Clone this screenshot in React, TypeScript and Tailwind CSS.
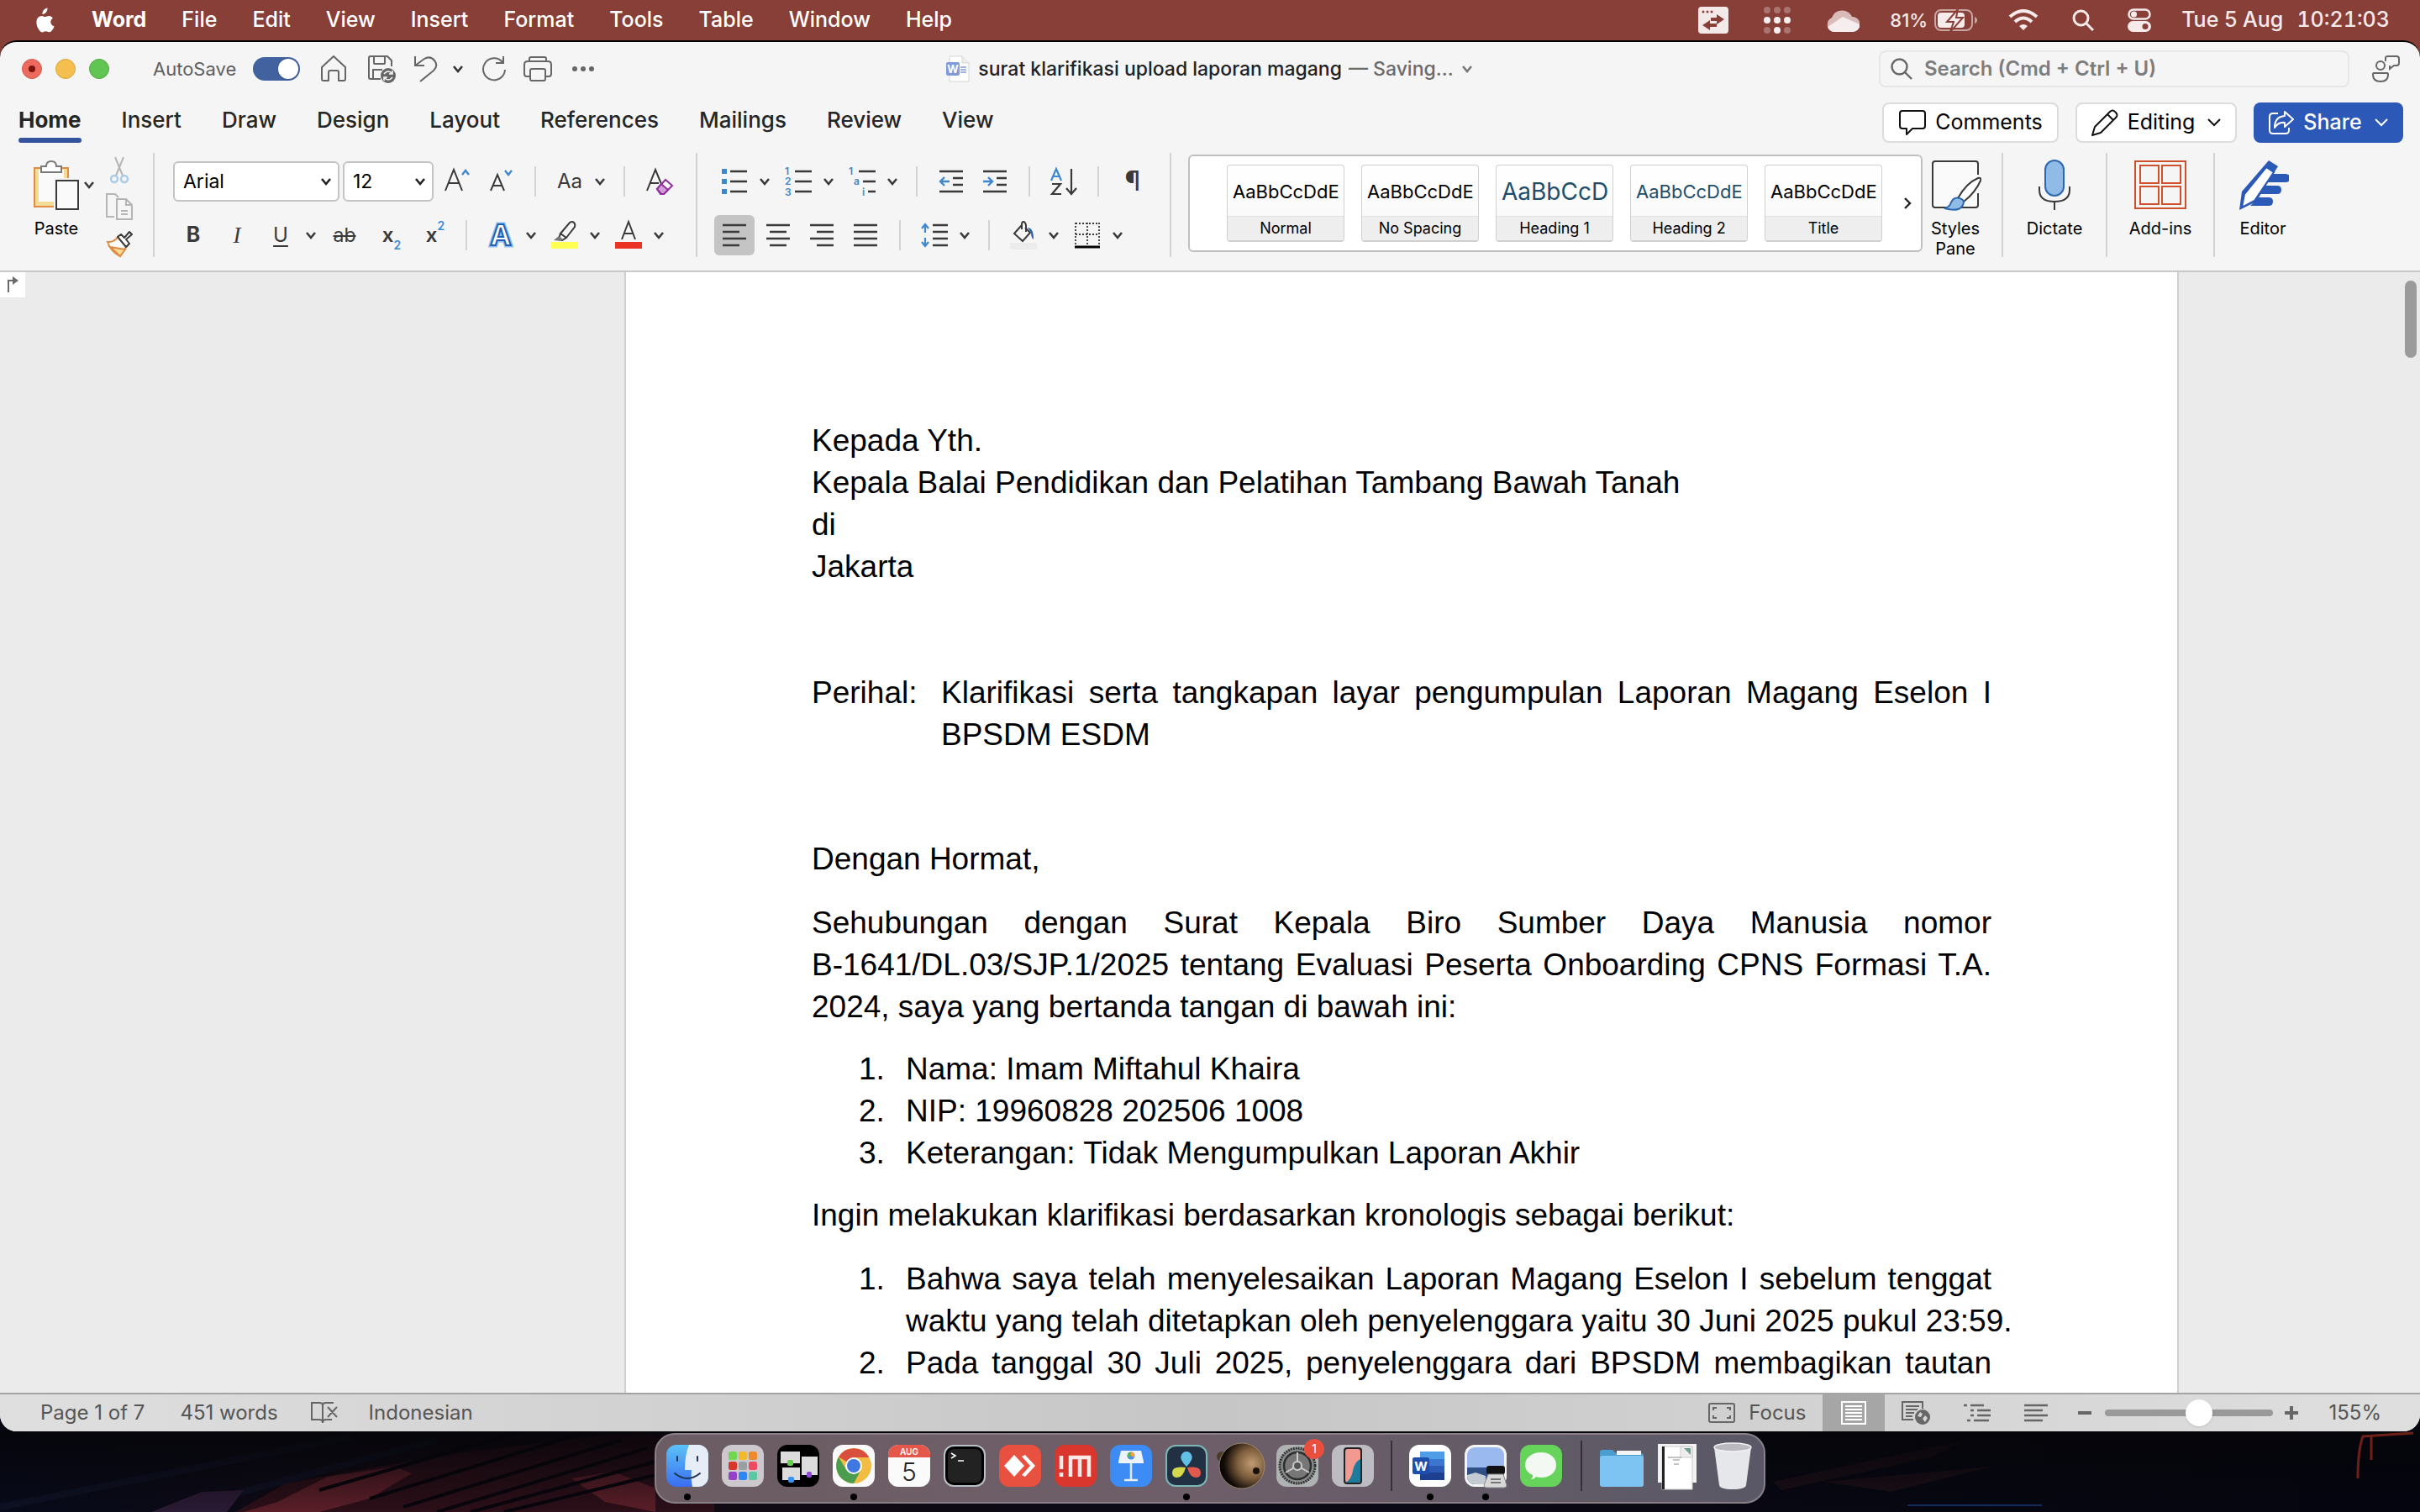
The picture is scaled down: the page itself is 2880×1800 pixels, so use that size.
import React from 'react';

const INK = '#3b3a39';
const BLUE = '#3d88cf';

const menus = ['File', 'Edit', 'View', 'Insert', 'Format', 'Tools', 'Table', 'Window', 'Help'];
const tabs = ['Insert', 'Draw', 'Design', 'Layout', 'References', 'Mailings', 'Review', 'View'];

function Chevron({ className = '' }: any) {
  return (
    <svg viewBox="0 0 16 16" className={'w-4 h-4 ' + className} fill="none" stroke="currentColor" strokeWidth="2.6">
      <path d="M3 5l5 6 5-6" />
    </svg>
  );
}

function Tool({ label, className = '', children }: any) {
  return (
    <button aria-label={label} className={'w-8 h-8 shrink-0 flex items-center justify-center ' + className}>
      <svg viewBox="0 0 32 32" className="w-8 h-8 overflow-visible" fill="none" stroke={INK} strokeWidth="2">
        {children}
      </svg>
    </button>
  );
}

function Drop({ label, className = 'ml-3' }: any) {
  return (
    <button aria-label={label + ' options'} className={'w-4 h-8 shrink-0 flex items-center text-[#3b3a39] ' + className}>
      <Chevron />
    </button>
  );
}

function Sep({ className = 'ml-5' }: any) {
  return <div className={'w-0.5 h-9 shrink-0 bg-[#d4d4d4] ' + className} />;
}

function Divider({ className = '' }: any) {
  return <div className={'w-0.5 h-[124px] shrink-0 bg-[#d2d2d2] ' + className} />;
}

function MenuBar() {
  return (
    <header className="h-12 shrink-0 bg-[#883f38] flex items-center justify-between text-white text-[25px] font-medium pl-10 pr-9">
      <nav className="flex items-center gap-[42px]">
        <button aria-label="Apple">
          <svg viewBox="0 0 27 32" className="w-[27px] h-8" fill="#fff">
            <path d="M18.500 0.500c.2 2-.6 3.900-1.700 5.200-1.200 1.400-2.800 2.300-4.300 2.200-.2-1.900.6-3.800 1.700-5.100C15.300 1.500 17.100.6 18.500.5zM22.300 17c0-3 2.500-4.500 2.600-4.600-1.500-2.100-3.700-2.400-4.500-2.400-1.900-.2-3.700 1.100-4.700 1.100s-2.500-1.100-4-1.100C9.500 10 7.600 11.200 6.500 13c-2.300 4-.6 9.900 1.600 13.100 1.100 1.600 2.400 3.400 4.100 3.300 1.600-.1 2.300-1.100 4.200-1.100 2 0 2.500 1.100 4.300 1 1.800 0 2.900-1.600 4-3.200 1.200-1.800 1.700-3.600 1.800-3.700-.1 0-4.200-1.500-4.200-5.400z" transform="translate(-2 1)" />
          </svg>
        </button>
        <button className="font-bold">Word</button>
        {menus.map((m) => <button key={m}>{m}</button>)}
      </nav>
      <div className="flex items-center text-[#f6eae9]">
        <svg viewBox="0 0 36 32" className="w-9 h-8" fill="#f3e9e8">
          <rect width="36" height="32" rx="4" />
          <g fill="#883f38"><circle cx="6" cy="6" r="1.500" /><circle cx="11" cy="6" r="1.500" /><circle cx="16" cy="6" r="1.500" /><path d="M31 15l-9-6v4h-7v4h7v4zM5 22l9-6v4h8v4h-8v4z" /></g>
        </svg>
        <svg viewBox="0 0 32 32" className="w-8 h-8 ml-[42px]" fill="#f8eeee">
          {[4, 16, 28].map((x) => (
            <g key={x}><circle cx={x} cy="4" r="4" opacity=".3" /><circle cx={x} cy="16" r="4" /><circle cx={x} cy="28" r="4" opacity={x === 16 ? 1 : 0.3} /></g>
          ))}
        </svg>
        <svg viewBox="0 0 40 28" className="w-10 h-7 ml-[42px]">
          <path d="M9 28a9 9 0 0 1-2-17 13 13 0 0 1 24-1 9 9 0 0 1 1 18z" fill="#d9bcb9" />
          <path d="M2 22l18-12 20 9a8 8 0 0 1-8 9H9a9 9 0 0 1-7-6z" fill="#f6eeee" />
        </svg>
        <span className="text-[22px] ml-9">81%</span>
        <svg viewBox="0 0 52 26" className="w-[52px] h-[26px] ml-2">
          <rect x="1" y="1" width="44" height="24" rx="7" fill="none" stroke="#c9a5a1" strokeWidth="2" />
          <rect x="4" y="4" width="32" height="18" rx="4" fill="#f6eaea" />
          <path d="M28 0L15 15h8l-4 12L34 10h-8z" fill="#f6eaea" stroke="#883f38" strokeWidth="2" />
          <path d="M48 9v8q3-1 3-4t-3-4z" fill="#c9a5a1" />
        </svg>
        <svg viewBox="0 0 36 26" className="w-9 h-[26px] ml-9" fill="none" stroke="#f6eaea" strokeWidth="4">
          <path d="M2 9q16-14 32 0M8 15q10-9 20 0" />
          <path d="M18 25l-5-5q5-4 10 0z" fill="#f6eaea" stroke="none" />
        </svg>
        <svg viewBox="0 0 26 26" className="w-[26px] h-[26px] ml-10" fill="none" stroke="#f6eaea" strokeWidth="3">
          <circle cx="10.500" cy="10.500" r="8.500" /><path d="M17 17l8 8" />
        </svg>
        <svg viewBox="0 0 28 28" className="w-7 h-7 ml-10">
          <rect x="1.500" y="1.500" width="25" height="11" rx="5.500" fill="none" stroke="#f6eaea" strokeWidth="2.500" />
          <circle cx="7.500" cy="7" r="3.500" fill="#f6eaea" />
          <rect y="15" width="28" height="13" rx="6.500" fill="#f6eaea" />
          <circle cx="21" cy="21.500" r="3.500" fill="#883f38" />
        </svg>
        <span className="ml-9">Tue 5 Aug</span>
        <span className="ml-4 tabular-nums">10:21:03</span>
      </div>
    </header>
  );
}

function TitleBar() {
  return (
    <div className="h-16 shrink-0 grid grid-cols-[1fr_auto_1fr] items-center px-6">
      <div className="flex items-center text-[#5f5f5f]">
        <button aria-label="Close" className="w-6 h-6 ml-0.5 rounded-full bg-[#ed6a5e] border border-[#d35b50] flex items-center justify-center"><span className="w-2 h-2 rounded-full bg-[#7a130c]" /></button>
        <button aria-label="Minimize" className="w-6 h-6 ml-4 rounded-full bg-[#f4bf4f] border border-[#d9a440]" />
        <button aria-label="Zoom" className="w-6 h-6 ml-4 rounded-full bg-[#61c554] border border-[#51a73e]" />
        <label htmlFor="autosave" className="ml-[52px] text-[22px]">AutoSave</label>
        <span className="relative ml-5 w-14 h-7">
          <input id="autosave" type="checkbox" role="switch" defaultChecked className="appearance-none block w-14 h-7 rounded-full bg-[#41629f]" />
          <span className="absolute right-0.5 top-0.5 w-6 h-6 rounded-full bg-white shadow pointer-events-none" />
        </span>
        <button aria-label="Home" className="ml-6">
          <svg viewBox="0 0 32 32" className="w-8 h-8" fill="none" stroke="#666" strokeWidth="2"><path d="M2 14L16 1l14 13v14q0 2-2 2h-6V20q0-2-2-2h-8q-2 0-2 2v10H4q-2 0-2-2z" strokeLinejoin="round" /></svg>
        </button>
        <button aria-label="Save" className="ml-6">
          <svg viewBox="0 0 34 34" className="w-[34px] h-[34px]" fill="none" stroke="#666" strokeWidth="2">
            <path d="M16 29H4q-2 0-2-2V4q0-2 2-2h20l5 5v7M8 2v8q0 1 1 1h11q1 0 1-1V2M7 29V18h11" /><circle cx="25" cy="25" r="9" fill="#666" stroke="none" />
            <path d="M20 23q5-6 10 0M30 19v4h-4M30 27q-5 6-10 0M20 31v-4h4" stroke="#f5f5f5" strokeWidth="1.600" />
          </svg>
        </button>
        <button aria-label="Undo" className="ml-5">
          <svg viewBox="0 0 30 32" className="w-[30px] h-8" fill="none" stroke="#666" strokeWidth="2"><path d="M3 1v11h11M3 12L14 4q7-4 12 2t-1 12L9 31" /></svg>
        </button>
        <Chevron className="ml-4 text-[#333]" />
        <button aria-label="Redo" className="ml-5">
          <svg viewBox="0 0 30 30" className="w-[30px] h-[30px]" fill="none" stroke="#666" strokeWidth="2"><path d="M25 7A13 13 0 1 0 28 16M26 0v8h-9" /></svg>
        </button>
        <button aria-label="Print" className="ml-5">
          <svg viewBox="0 0 34 30" className="w-[34px] h-[30px]" fill="none" stroke="#666" strokeWidth="2">
            <path d="M8 24H4q-3 0-3-3V10q0-4 4-4h24q4 0 4 4v11q0 3-3 3h-4M7 6V3q0-2 2-2h16q2 0 2 2v3" /><rect x="8" y="15" width="18" height="14" rx="2" />
          </svg>
        </button>
        <button aria-label="More" className="ml-6 flex gap-1">
          <span className="w-1.5 h-1.5 rounded-full bg-[#666]" /><span className="w-1.5 h-1.5 rounded-full bg-[#666]" /><span className="w-1.5 h-1.5 rounded-full bg-[#666]" />
        </button>
      </div>
      <h1 className="flex items-center text-[23px] font-medium text-[#222]">
        <svg viewBox="0 0 28 32" className="w-7 h-8 mr-2.5">
          <path d="M4 1h15l8 8v22H4z" fill="#fff" stroke="#d5d5d5" /><path d="M19 1v8h8" fill="#eee" stroke="#d5d5d5" />
          <rect y="8" width="16" height="16" rx="2" fill="#7f9bdb" />
          <text x="8" y="20.500" fontSize="13" fontWeight="700" fill="#fff" textAnchor="middle">W</text>
          <path d="M17 14h7M17 17h7M17 20h7" stroke="#7f9bdb" strokeWidth="1.500" />
        </svg>
        surat klarifikasi upload laporan magang
        <span className="ml-2 text-[#6b6b6b]">— Saving...</span>
        <Chevron className="ml-2 text-[#777]" />
      </h1>
      <div className="flex items-center justify-end">
        <label className="w-[560px] h-11 rounded-lg border-2 border-[#e7e7e7] bg-[#f5f5f5] flex items-center px-3">
          <svg viewBox="0 0 26 26" className="w-[26px] h-[26px] shrink-0" fill="none" stroke="#666" strokeWidth="2.400"><circle cx="10.500" cy="10.500" r="9" /><path d="M17 17l8 8" /></svg>
          <input aria-label="Search" placeholder="Search (Cmd + Ctrl + U)" className="ml-3.5 w-full outline-none text-[24px] font-semibold placeholder:text-[#7d7d7d]" />
        </label>
        <button aria-label="Account" className="ml-[26px]">
          <svg viewBox="0 0 34 34" className="w-[34px] h-[34px]" fill="none" stroke="#666" strokeWidth="2">
            <circle cx="11" cy="13" r="5" /><path d="M3 22h16q1 0 1 2 0 8-9 8T2 24q0-2 1-2zM17 8V4q0-2 3-2h10q3 0 3 3v5q0 3-3 3h-3l-5 4v-4" />
          </svg>
        </button>
      </div>
    </div>
  );
}

function TabRow() {
  return (
    <div className="h-16 shrink-0 flex items-center justify-between pl-[22px] pr-5">
      <nav className="flex items-center gap-12 mb-2 text-[26px] font-medium text-[#262626]">
        <button className="relative font-bold h-14">
          Home
          <span className="absolute left-0 right-0 bottom-0 h-1.5 rounded-full bg-[#33539c]" />
        </button>
        {tabs.map((t) => <button key={t}>{t}</button>)}
      </nav>
      <div className="flex items-center gap-5 text-[25px] text-black">
        <button className="h-12 w-[210px] rounded-lg bg-white border-2 border-[#dcdcdc] flex items-center justify-center gap-2.5">
          <svg viewBox="0 0 34 32" className="w-[34px] h-8" fill="none" stroke="#111" strokeWidth="2"><path d="M5 2h24q3 0 3 3v15q0 3-3 3H17l-7 7v-7H5q-3 0-3-3V5q0-3 3-3z" strokeLinejoin="round" /></svg>
          Comments
        </button>
        <button className="h-12 w-48 rounded-lg bg-white border-2 border-[#dcdcdc] flex items-center justify-center gap-2.5">
          <svg viewBox="0 0 34 34" className="w-[34px] h-[34px]" fill="none" stroke="#111" strokeWidth="2" strokeLinejoin="round"><path d="M2 32l3-10L23 4q3-3 6 0l1 1q3 3 0 6L12 29zM20 7l7 7" /></svg>
          Editing
          <svg viewBox="0 0 18 12" className="w-[18px] h-3 ml-1" fill="none" stroke="#111" strokeWidth="2"><path d="M2 2l7 7 7-7" /></svg>
        </button>
        <button className="h-12 w-[178px] rounded-lg bg-[#2c59b7] text-white font-medium flex items-center justify-center gap-2.5">
          <svg viewBox="0 0 32 30" className="w-8 h-[30px]" fill="none" stroke="#fff" strokeWidth="2" strokeLinejoin="round"><path d="M12 4H6Q2 4 2 8v16q0 4 4 4h15q4 0 4-4v-3M20 2l10 9-10 9v-5q-8-1-12 6 0-13 12-14z" /></svg>
          Share
          <svg viewBox="0 0 18 12" className="w-[18px] h-3 ml-1" fill="none" stroke="#fff" strokeWidth="2"><path d="M2 2l7 7 7-7" /></svg>
        </button>
      </div>
    </div>
  );
}

function PasteGroup() {
  return (
    <div className="flex">
      <div className="w-[78px] flex flex-col items-center">
        <button className="flex flex-col items-center text-[20px] leading-6 text-black">
          <svg viewBox="0 0 54 62" className="w-[54px] h-[62px] mt-2 mb-2">
            <path d="M1 10h40v46H1z" fill="#f5dc96" stroke="#e08c44" strokeWidth="2" />
            <path d="M6 12h30v38H6z" fill="#fafafa" />
            <path d="M9 15V8h6q0-6 6-6t6 6h6v7z" fill="#fff" stroke="#7a7a7a" strokeWidth="2" />
            <path d="M24 22h30v40H24z" fill="#f5f5f5" />
            <path d="M27 25h26v34H27z" fill="#fafafa" stroke={INK} strokeWidth="2" />
          </svg>
          Paste
        </button>
      </div>
      <Drop label="Paste" className="mt-[22px] -ml-2" />
      <div className="ml-3 mt-1 flex flex-col gap-3">
        <Tool label="Cut"><g stroke="#b5b5b5"><path d="M11 1l9 22M21 1l-9 22" /></g><g stroke="#a9cbe8" strokeWidth="2.400"><circle cx="10" cy="27" r="4" /><circle cx="22" cy="27" r="4" /></g></Tool>
        <Tool label="Copy"><g stroke="#b5b5b5"><path d="M10 28H1V1h10l4 4M13 7h11l7 7v17H13zM24 7v7h7M18 21h8M18 25h8" /></g></Tool>
        <Tool label="Format Painter">
          <path d="M2 14q8 1 13-7l11 11q-6 6-9 13Q6 26 2 14z" fill="#fdfdfd" stroke="#e08c44" /><path d="M5 20l18 3-6 8z" fill="#f5dc96" stroke="#e08c44" />
          <path d="M14 8l4-3 4 4 6-7 3 3-7 6 4 5-4 4z" fill="#fff" strokeLinejoin="round" />
        </Tool>
      </div>
    </div>
  );
}

function FontGroup() {
  return (
    <div className="flex flex-col pt-2.5 gap-4">
      <div className="h-12 flex items-center text-[23px] text-black">
        <span className="relative">
          <select aria-label="Font" className="appearance-none w-[198px] h-12 rounded-md bg-white border-2 border-[#c4c4c4] pl-2.5"><option>Arial</option></select>
          <Chevron className="absolute right-2 top-4 pointer-events-none text-[#222]" />
        </span>
        <span className="relative ml-1">
          <select aria-label="Font size" className="appearance-none w-[108px] h-12 rounded-md bg-white border-2 border-[#c4c4c4] pl-2.5"><option>12</option></select>
          <Chevron className="absolute right-2 top-4 pointer-events-none text-[#222]" />
        </span>
        <Tool label="Increase Font Size" className="ml-3"><path d="M2 27L12 2l10 25M6 18h12" /><path d="M22 8l4-5 4 5" stroke={BLUE} strokeWidth="2.400" /></Tool>
        <Tool label="Decrease Font Size" className="ml-5"><path d="M4 27L12 8l8 19M7 21h10" /><path d="M21 3l4 5 4-5" stroke={BLUE} strokeWidth="2.400" /></Tool>
        <Sep className="ml-6" />
        <button className="ml-6 w-8 text-[24px] text-[#3b3a39] flex justify-center">Aa</button>
        <Drop label="Change Case" />
        <Sep />
        <Tool label="Clear Formatting" className="ml-6"><path d="M2 27L12 2l7 17M6 18h10" /><g stroke="#90309c"><path d="M14 25l10-11 8 7-10 10h-4z" fill="#fff" /><path d="M14 25l5-6 8 7-5 5h-3z" fill="#d69bdc" /></g></Tool>
      </div>
      <div className="h-12 flex items-center pl-2 text-[#3b3a39]">
        <button className="w-8 text-[25px] font-bold">B</button>
        <button className="w-8 ml-5 text-[27px] italic font-['Liberation_Serif',serif]">I</button>
        <button className="w-8 ml-5 text-[24px] underline underline-offset-4">U</button>
        <Drop label="Underline" />
        <button className="w-8 ml-4 text-[23px] line-through flex justify-center">ab</button>
        <button aria-label="Subscript" className="w-8 ml-6 text-[24px] font-semibold flex justify-center items-center">x<span className="text-[14px] text-[#3d88cf] self-end -mb-1">2</span></button>
        <button aria-label="Superscript" className="w-8 ml-5 text-[24px] font-semibold flex justify-center items-center">x<span className="text-[14px] text-[#3d88cf] self-start -mt-1">2</span></button>
        <Sep />
        <Tool label="Text Effects" className="ml-6"><text x="16" y="28" fontSize="34" fontWeight="700" textAnchor="middle" stroke="#8fc0ee" strokeWidth="5" fill="#8fc0ee">A</text><text x="16" y="28" fontSize="34" fontWeight="700" textAnchor="middle" stroke="#1f5fb4" strokeWidth="2" fill="#fff">A</text></Tool>
        <Drop label="Text Effects" />
        <Tool label="Highlight" className="ml-4"><path d="M11 14L22 1q3-2 5 0t1 5L18 19zM11 14l-2 6 4 2 5-3" /><path d="M3 22l6-5 5 4-2 2z" fill="#777" stroke="none" /><path d="M0 24h32v8H0z" fill="#ffff54" stroke="none" /></Tool>
        <Drop label="Highlight" />
        <Tool label="Font Color" className="ml-4"><path d="M8 21L16 0l8 21M11 14h10" /><path d="M0 24h32v8H0z" fill="#eb3323" stroke="none" /></Tool>
        <Drop label="Font Color" />
      </div>
    </div>
  );
}

function ParagraphGroup() {
  return (
    <div className="flex flex-col pt-2.5 gap-4">
      <div className="h-12 flex items-center pl-2">
        <Tool label="Bullets"><path d="M11 4h20M11 16h20M11 28h20" strokeWidth="2.400" /><path d="M1 1h6v6H1zM1 13h6v6H1zM1 25h6v6H1z" fill={BLUE} stroke="none" /></Tool>
        <Drop label="Bullets" />
        <Tool label="Numbering" className="ml-4">
          <path d="M12 4h20M12 16h20M12 28h20" strokeWidth="2.400" />
          <g fill={BLUE} stroke="none" fontSize="12" fontWeight="600"><text x="0" y="8">1</text><text x="0" y="20">2</text><text x="0" y="33">3</text></g>
        </Tool>
        <Drop label="Numbering" />
        <Tool label="Multilevel List" className="ml-4">
          <path d="M12 4h20M17 16h15M23 28h9" strokeWidth="2.400" />
          <g fill={BLUE} stroke="none" fontSize="12" fontWeight="600"><text x="0" y="8">1</text><text x="6" y="20">a</text><text x="16" y="33">i</text></g>
        </Tool>
        <Drop label="Multilevel List" />
        <Sep />
        <Tool label="Decrease Indent" className="ml-6"><path d="M2 4h28M18 12h12M18 20h12M2 28h28" strokeWidth="2.400" /><path d="M14 16H3M8 11l-5 5 5 5" stroke={BLUE} strokeWidth="2.400" /></Tool>
        <Tool label="Increase Indent" className="ml-5"><path d="M2 4h28M18 12h12M18 20h12M2 28h28" strokeWidth="2.400" /><path d="M2 16h11M8 11l5 5-5 5" stroke={BLUE} strokeWidth="2.400" /></Tool>
        <Sep className="ml-6" />
        <Tool label="Sort" className="ml-6"><path d="M1 15L7 1l6 14M3 10h8" stroke={BLUE} strokeWidth="2.200" /><path d="M2 19h10L2 31h11M25 1v29M19 24l6 7 6-7" strokeWidth="2.200" /></Tool>
        <Sep className="ml-6" />
        <button aria-label="Show marks" className="ml-6 w-8 text-[32px] leading-8 text-[#3b3a39]">¶</button>
      </div>
      <div className="h-12 flex items-center">
        <button aria-label="Align Left" className="w-12 h-12 rounded-md bg-[#c4c4c4] flex items-center justify-center">
          <svg viewBox="0 0 32 32" className="w-8 h-8" fill="none" stroke={INK} strokeWidth="2.400"><path d="M2 4h28M2 12h20M2 20h28M2 28h20" /></svg>
        </button>
        <Tool label="Center" className="ml-3"><path d="M2 4h28M6 12h20M2 20h28M6 28h20" strokeWidth="2.400" /></Tool>
        <Tool label="Align Right" className="ml-5"><path d="M2 4h28M10 12h20M2 20h28M10 28h20" strokeWidth="2.400" /></Tool>
        <Tool label="Justify" className="ml-5"><path d="M2 4h28M2 12h28M2 20h28M2 28h28" strokeWidth="2.400" /></Tool>
        <Sep className="ml-6" />
        <Tool label="Line Spacing" className="ml-6"><path d="M14 4h18M14 12h18M14 20h18M14 28h18" strokeWidth="2.400" /><path d="M5 13V3M1 8l4-5 4 5M5 19v10M1 24l4 5 4-5" stroke={BLUE} strokeWidth="2.200" /></Tool>
        <Drop label="Line Spacing" />
        <Sep />
        <Tool label="Shading" className="ml-6"><path d="M14 4L5 14l10 9 9-10-6-6M14 9V3q0-3 2-3t3 4v8" /><path d="M21 7q7 0 7 14-3-2-3-8z" fill="#2563b8" stroke="none" /><path d="M0 25h32v8H0z" fill="#ececec" stroke="none" /></Tool>
        <Drop label="Shading" />
        <Tool label="Borders" className="ml-4"><path d="M2 2h28M2 15h28M2 1v27M16 1v27M30 1v27" strokeDasharray="2 2" strokeWidth="1.800" /><path d="M1 30h30" stroke="#000" strokeWidth="3" /></Tool>
        <Drop label="Borders" />
      </div>
    </div>
  );
}

const styles = [
  { name: 'Normal', sample: 'AaBbCcDdE', cls: 'text-[22px] text-black' },
  { name: 'No Spacing', sample: 'AaBbCcDdE', cls: 'text-[22px] text-black' },
  { name: 'Heading 1', sample: 'AaBbCcD', cls: 'text-[28px] text-[#1f4e6b]' },
  { name: 'Heading 2', sample: 'AaBbCcDdE', cls: 'text-[22px] text-[#1f4e6b]' },
  { name: 'Title', sample: 'AaBbCcDdE', cls: 'text-[22px] text-black' },
];

function StyleGallery() {
  return (
    <div className="mt-0.5 h-[116px] w-[874px] shrink-0 rounded-md bg-white border-2 border-[#c0c0c0] flex items-center pl-11">
      <div className="flex gap-5">
        {styles.map((s) => (
          <button key={s.name} className="w-[140px] h-[92px] rounded-sm border border-[#d0d0d0] border-b-2 flex flex-col text-left bg-linear-to-b from-white to-[#f7f7f7]">
            <span className="pl-1.5 h-[60px] flex items-center pt-0.5">
              <span className={'whitespace-nowrap ' + s.cls}>{s.sample}</span>
            </span>
            <span className="flex-1 w-full bg-[#eeeeee] border-t border-[#e0e0e0] text-[18px] leading-7 text-black text-center">{s.name}</span>
          </button>
        ))}
      </div>
      <svg viewBox="0 0 12 16" className="w-3 h-4 ml-6" fill="none" stroke="#222" strokeWidth="2.400"><path d="M3 2l6 6-6 6" /></svg>
    </div>
  );
}

function BigTool({ label, className = '', children }: any) {
  return (
    <button className={'shrink-0 flex flex-col items-center text-[20px] leading-6 text-black ' + className}>
      <svg viewBox="0 0 62 64" className="w-[62px] h-16 mt-2 mb-1.5" fill="none" strokeWidth="2">{children}</svg>
      {label}
    </button>
  );
}

function Ribbon() {
  return (
    <div className="h-[146px] shrink-0 border-b-2 border-[#c9c9c9] flex items-start pl-7 pt-1">
      <PasteGroup />
      <Divider className="ml-6" />
      <div className="ml-[22px]"><FontGroup /></div>
      <Divider className="ml-7" />
      <div className="ml-5"><ParagraphGroup /></div>
      <Divider className="ml-7" />
      <div className="ml-5"><StyleGallery /></div>
      <BigTool label={<>Styles<br />Pane</>} className="w-[78px]">
        <path d="M58 40v14q0 3-3 3H7q-3 0-3-3V5q0-3 3-3h48q3 0 3 3v13" stroke={INK} fill="#fafafa" />
        <path d="M34 46q10-18 24-24 4-1 3 3-6 14-20 25z" stroke={INK} fill="#fff" />
        <path d="M18 58q6-1 8-7 3-7 10-5t4 8q-4 9-22 4z" stroke="#2b66b1" fill="#8fbbe6" />
      </BigTool>
      <Divider className="ml-4" />
      <BigTool label="Dictate" className="w-[122px]">
        <rect x="20" y="1" width="22" height="42" rx="11" fill="#8fbbe6" stroke="#2b66b1" /><path d="M13 32v4q0 14 18 14t18-14v-4M31 50v10" stroke={INK} />
      </BigTool>
      <Divider />
      <BigTool label="Add-ins" className="w-[126px]">
        <path d="M1 2h60v56H1zM7 7h22v21H7zM33 7h22v21H33zM7 32h22v21H7zM33 32h22v21H33z" stroke="#d0502c" />
      </BigTool>
      <Divider />
      <BigTool label="Editor" className="w-[114px]">
        <path d="M36 17h22q5 0 5 5t-5 5H32zM31 31h17q5 0 5 5t-5 5H26zM26 45h12q5 0 5 5t-5 5H16z" fill="#2b59b8" />
        <path d="M38 1l11 7-26 42L3 60l3-22z" fill="#2b59b8" /><path d="M35 9l9 6-23 34-15 8 3-16z" fill="#fff" stroke="#2b59b8" />
      </BigTool>
    </div>
  );
}

function Line({ children, className = '' }: any) {
  return <span className={'block whitespace-nowrap [text-align-last:justify] ' + className}>{children}</span>;
}

function Item({ n, children }: any) {
  return (
    <li className="flex pl-14">
      <span className="w-14 shrink-0">{n}.</span>
      <div className="flex-1 min-w-0">{children}</div>
    </li>
  );
}

function Page() {
  return (
    <main className="relative flex-1 min-h-0 overflow-hidden bg-[#ebebeb] flex pl-[743px]">
      <div className="absolute left-0 top-0 w-[30px] h-[30px] bg-white">
        <svg viewBox="0 0 30 30" className="w-[30px] h-[30px]"><path d="M10 24V10h6" fill="none" stroke="#6b6b6b" strokeWidth="2" /><path d="M15 5l7 5-7 5z" fill="#6b6b6b" /></svg>
      </div>
      <article className="w-[1850px] shrink-0 bg-white border-x-2 border-[#cfcfcf] px-[221px] pt-[176px] text-[37px] leading-[50px] text-black font-['Liberation_Sans',Arial,sans-serif]">
        <p>Kepada Yth.</p>
        <p>Kepala Balai Pendidikan dan Pelatihan Tambang Bawah Tanah</p>
        <p>di</p>
        <p>Jakarta</p>
        <div className="flex mt-[100px]">
          <span className="w-[154px] shrink-0">Perihal:</span>
          <p className="flex-1">
            <Line>Klarifikasi serta tangkapan layar pengumpulan Laporan Magang Eselon I</Line>
            BPSDM ESDM
          </p>
        </div>
        <p className="mt-[98px]">Dengan Hormat,</p>
        <p className="mt-[26px]">
          <Line>Sehubungan dengan Surat Kepala Biro Sumber Daya Manusia nomor</Line>
          <Line>B-1641/DL.03/SJP.1/2025 tentang Evaluasi Peserta Onboarding CPNS Formasi T.A.</Line>
          2024, saya yang bertanda tangan di bawah ini:
        </p>
        <ol className="mt-6">
          <Item n={1}>Nama: Imam Miftahul Khaira</Item>
          <Item n={2}>NIP: 19960828 202506 1008</Item>
          <Item n={3}>Keterangan: Tidak Mengumpulkan Laporan Akhir</Item>
        </ol>
        <p className="mt-6">Ingin melakukan klarifikasi berdasarkan kronologis sebagai berikut:</p>
        <ol className="mt-[26px]">
          <Item n={1}>
            <Line>Bahwa saya telah menyelesaikan Laporan Magang Eselon I sebelum tenggat</Line>
            <Line>waktu yang telah ditetapkan oleh penyelenggara yaitu 30 Juni 2025 pukul 23:59.</Line>
          </Item>
          <Item n={2}><Line>Pada tanggal 30 Juli 2025, penyelenggara dari BPSDM membagikan tautan</Line></Item>
        </ol>
      </article>
      <div className="absolute right-1 top-2.5 w-3.5 h-[92px] rounded-full bg-[#9b9b9b]" />
    </main>
  );
}

function StatusBar() {
  return (
    <footer className="h-[46px] shrink-0 border-t-2 border-[#a3a3a3] bg-linear-to-r from-[#dfdfdf] via-[#c6c6c6] to-[#dfdfdf] flex items-center justify-between pl-12 pr-[46px] text-[24px] text-[#555]">
      <div className="flex items-center">
        <button>Page 1 of 7</button>
        <button className="ml-[42px]">451 words</button>
        <button aria-label="Proofing" className="ml-[38px]">
          <svg viewBox="0 0 34 28" className="w-[34px] h-7" fill="none" stroke="#666" strokeWidth="2"><path d="M15 4v22M28 2h-9q-4 0-4 3 0-3-4-3H2v20h9q4 0 4 4 0-4 4-4h7M21 7l11 12M32 7L21 19" /></svg>
        </button>
        <button className="ml-9">Indonesian</button>
      </div>
      <div className="flex items-center h-full">
        <button className="flex items-center gap-4">
          <svg viewBox="0 0 32 24" className="w-8 h-6" fill="none" stroke="#666" strokeWidth="2"><rect x="1" y="1" width="30" height="22" rx="2" /><path d="M6 9V6h4M22 6h4v3M26 15v3h-4M10 18H6v-3" /></svg>
          Focus
        </button>
        <button aria-label="Print Layout" className="ml-5 w-[74px] h-full bg-[#a6a6a6] flex items-center justify-center">
          <svg viewBox="0 0 30 28" className="w-[30px] h-7" fill="none" stroke="#fff" strokeWidth="2"><rect x="1" y="1" width="28" height="26" /><path d="M5 6h20M5 10h20M5 14h20M5 18h20M5 22h20" /></svg>
        </button>
        <button aria-label="Web Layout" className="ml-5">
          <svg viewBox="0 0 34 28" className="w-[34px] h-7" fill="none" stroke="#666" strokeWidth="2"><path d="M14 22H1V1h24v8M5 6h16M5 10h14M5 14h10M5 18h8" /><circle cx="25" cy="19" r="9" fill="#666" stroke="none" /><path d="M22 13l3 2-2 4-4-1M28 17l3 3-3 5-3-4z" fill="#d5d5d5" stroke="none" /></svg>
        </button>
        <button aria-label="Outline" className="ml-10">
          <svg viewBox="0 0 32 24" className="w-8 h-6" fill="none" stroke="#666" strokeWidth="2.400"><path d="M0 3h4M8 3h16M8 9h4M16 9h16M8 15h4M16 15h16M4 21h4M12 21h18" /></svg>
        </button>
        <button aria-label="Draft" className="ml-10">
          <svg viewBox="0 0 28 24" className="w-7 h-6" fill="none" stroke="#666" strokeWidth="2.400"><path d="M0 3h28M0 9h22M0 15h28M0 21h22" /></svg>
        </button>
        <button aria-label="Zoom out" className="ml-9 w-4 h-1 bg-[#666]" />
        <input aria-label="Zoom" type="range" min="0" max="100" defaultValue="57" className="ml-4 w-[200px] h-2 rounded-full bg-[#999] appearance-none [&::-webkit-slider-thumb]:appearance-none [&::-webkit-slider-thumb]:w-8 [&::-webkit-slider-thumb]:h-8 [&::-webkit-slider-thumb]:rounded-full [&::-webkit-slider-thumb]:bg-white [&::-webkit-slider-thumb]:shadow" />
        <button aria-label="Zoom in" className="ml-3.5">
          <svg viewBox="0 0 16 16" className="w-4 h-4" stroke="#666" strokeWidth="4"><path d="M0 8h16M8 0v16" /></svg>
        </button>
        <button className="ml-9">155%</button>
      </div>
    </footer>
  );
}

function DockIcon({ label, running, children }: any) {
  return (
    <button aria-label={label} className="relative w-[50px] h-[50px] shrink-0">
      <svg viewBox="0 0 50 50" className="w-[50px] h-[50px] overflow-visible">{children}</svg>
      {running && <span className="absolute left-[21px] -bottom-4 w-2 h-2 rounded-full bg-black" />}
    </button>
  );
}

const pad = ['#6fd84f', '#f2b92f', '#ec8b2e', '#d9362b', '#9a9fa3', '#ef4a5f', '#9440c9', '#2f86f0', '#5cc7a0'];

function Dock() {
  return (
    <div className="relative h-[84px] rounded-[24px] border-2 border-[#8a8088] bg-linear-to-r from-[#6c5d64] via-[#6d5e69] to-[#5a5866] flex items-center gap-4 px-3 pb-1.5">
      <DockIcon label="Finder" running>
        <defs>
          <linearGradient id="finder" x2="0" y2="1"><stop stopColor="#5cc3f7" /><stop offset="1" stopColor="#3a6df0" /></linearGradient>
        </defs>
        <rect width="50" height="50" rx="12" fill="url(#finder)" /><path d="M27 0h11a12 12 0 0 1 12 12v26a12 12 0 0 1-12 12h-7q-2-9-1-20h-8Q22 12 27 0z" fill="#e6edf6" />
        <path d="M13 14v5M37 14v5M10 34q15 12 30 0" fill="none" stroke="#1e3350" strokeWidth="2" strokeLinecap="round" />
      </DockIcon>
      <DockIcon label="Launchpad">
        <rect width="50" height="50" rx="12" fill="#cdc8cd" />
        {pad.map((c, i) => <rect key={c} x={8 + (i % 3) * 12} y={8 + Math.floor(i / 3) * 12} width="10" height="10" rx="2.500" fill={c} />)}
      </DockIcon>
      <DockIcon label="Mission Control">
        <rect width="50" height="50" rx="12" /><path d="M4 8h23v14H4zM29 14h19v22H29zM6 27h21v15H6z" fill="#dcdcdc" />
        <rect x="12" y="18" width="7" height="7" rx="2" fill="#62d14a" /><rect x="35" y="32" width="6" height="7" rx="2" fill="#9049d8" /><rect x="13" y="38" width="7" height="7" rx="2" fill="#3b94ee" />
      </DockIcon>
      <DockIcon label="Chrome" running>
        <rect width="50" height="50" rx="12" fill="#fafafa" /><circle cx="25" cy="25" r="21" fill="#f2bd42" />
        <path d="M25 25L7 14.500A21 21 0 0 1 43.500 15H25z" fill="#d94f3d" /><path d="M25 25l7 8-7 13A21 21 0 0 1 7 14.500l9 15z" fill="#4a9c4e" />
        <circle cx="25" cy="25" r="10" fill="#fff" /><circle cx="25" cy="25" r="8" fill="#3f78e0" />
      </DockIcon>
      <DockIcon label="Calendar">
        <rect width="50" height="50" rx="12" fill="#fafafa" /><path d="M0 15v-3A12 12 0 0 1 12 0h26a12 12 0 0 1 12 12v3z" fill="#e5564b" />
        <text x="25" y="12" fontSize="10" fontWeight="600" fill="#fff" textAnchor="middle">AUG</text>
        <text x="25" y="43" fontSize="30" fontWeight="300" fill="#222" textAnchor="middle">5</text>
      </DockIcon>
      <DockIcon label="Terminal">
        <rect width="50" height="50" rx="12" fill="#b9c0c6" /><rect x="2" y="2" width="46" height="46" rx="10" fill="#000" /><rect x="5" y="5" width="40" height="40" rx="7" fill="#222" />
        <path d="M9 10l5 3-5 3M17 19h7" fill="none" stroke="#fff" strokeWidth="1.600" />
      </DockIcon>
      <DockIcon label="AnyDesk">
        <rect width="50" height="50" rx="12" fill="#e8503f" /><path d="M18 12l12 13-12 13L6 25z" fill="#fff" /><path d="M27 14l4-2 12 13-12 13-4-2 10-11z" fill="#fff" />
      </DockIcon>
      <DockIcon label="Mail app">
        <rect width="50" height="50" rx="12" fill="#d9372e" /><path d="M8 13v16M8 33v5M19 38V15h22v23M30 15v23" fill="none" stroke="#fbeae8" strokeWidth="4.500" />
      </DockIcon>
      <DockIcon label="Keynote">
        <rect width="50" height="50" rx="12" fill="#3d8bf5" /><path d="M13 7h24l3 13v2H10v-2z" fill="#eef3f9" /><path d="M25 22v19M17 42h16" stroke="#e6edf5" strokeWidth="2.500" />
        <circle cx="25" cy="13" r="4.500" fill="#4b8fe8" /><path d="M25 13V8.500a4.500 4.500 0 0 1 4 6.500z" fill="#f2a33c" /><path d="M25 13l-4 2a4.500 4.500 0 0 1 4-6.500z" fill="#57b950" />
      </DockIcon>
      <DockIcon label="DaVinci Resolve" running>
        <rect width="50" height="50" rx="12" fill="#7bb7b4" /><rect x="2" y="2" width="46" height="46" rx="10" fill="#223043" />
        <path d="M25 26q-9-9-6-14 2-4 6-4t6 4q3 5-6 14z" fill="#62bfe6" /><path d="M24 27q-3 12-10 12-6 0-6-6 0-8 16-6z" fill="#d4d94b" /><path d="M26 27q3 12 10 12 6 0 6-6 0-8-16-6z" fill="#e4594e" />
      </DockIcon>
      <DockIcon label="Planet">
        <defs>
          <radialGradient id="planet" cx=".72" cy=".45" r=".72"><stop stopColor="#c09c72" /><stop offset=".45" stopColor="#7d5d3d" /><stop offset=".85" stopColor="#120c08" /><stop offset="1" stopColor="#070504" /></radialGradient>
        </defs>
        <circle cx="1" cy="14" r="6" fill="#4a3a2a" /><circle cx="25" cy="25" r="27" fill="url(#planet)" stroke="#a8946f" strokeWidth=".8" /><circle cx="42" cy="31" r="4" fill="#1c110a" />
      </DockIcon>
      <DockIcon label="System Settings">
        <rect width="50" height="50" rx="12" fill="#aeb2b2" /><circle cx="25" cy="25" r="21" fill="#8a8d8d" stroke="#333" strokeWidth="3" strokeDasharray="2 1" />
        <circle cx="25" cy="25" r="16" fill="#777" stroke="#2d2d2d" strokeWidth="2.500" /><path d="M25 25V9M25 25l14 8M25 25l-14 8" stroke="#ccc" strokeWidth="2" /><circle cx="25" cy="25" r="5" fill="#555" stroke="#ccc" strokeWidth="2" />
        <circle cx="45" cy="5" r="12" fill="#e84f3d" /><text x="45" y="10" fontSize="14" fill="#fff" textAnchor="middle">1</text>
      </DockIcon>
      <DockIcon label="iPhone Mirroring">
        <rect width="50" height="50" rx="12" fill="#bebcc3" /><rect x="14" y="3" width="22" height="44" rx="4" fill="#222" /><rect x="16" y="5" width="18" height="40" rx="3" fill="#f19a92" /><path d="M34 17q-7 3-9 14t-9 14h15q3 0 3-3z" fill="#1f7b9c" />
      </DockIcon>
      <div className="w-0.5 h-[60px] mx-1 bg-[#33303c]" />
      <DockIcon label="Word" running>
        <rect width="50" height="50" rx="12" fill="#fff" /><path d="M13 8h29v9H13z" fill="#4f9de6" /><path d="M13 17h29v8H13z" fill="#3c77cf" /><path d="M13 25h29v8H13z" fill="#2b59b4" /><path d="M13 33h29v9H13z" fill="#1c3f8f" />
        <rect x="4" y="15" width="20" height="20" rx="2" fill="#1f4fae" /><text x="14" y="30.500" fontSize="15" fontWeight="700" fill="#fff" textAnchor="middle">W</text>
      </DockIcon>
      <DockIcon label="Preview" running>
        <rect width="50" height="50" rx="12" fill="#f4f4f4" /><rect x="3" y="3" width="44" height="44" rx="9" fill="#9ab9ee" /><path d="M3 27h44v11a9 9 0 0 1-9 9H12a9 9 0 0 1-9-9z" fill="#2f4f85" /><path d="M3 36l10-3 12 4v10H12a9 9 0 0 1-9-9z" fill="#c3cbd3" />
        <rect x="26" y="25" width="22" height="10" rx="3" fill="#111" /><path d="M28 35h18l4 13q0 3-3 3H26q-3 0-3-3z" fill="#d8d8d8" stroke="#888" /><path d="M31 41h12M31 45h12" stroke="#555" strokeWidth="1.500" />
      </DockIcon>
      <DockIcon label="Messages">
        <rect width="50" height="50" rx="12" fill="#66d45b" /><path d="M25 9c10 0 18 6 18 15s-8 15-18 15q-3 0-6-1-2 3-6 3 3-3 2-5-9-4-9-12C6 15 15 9 25 9z" fill="#f4f8f2" />
      </DockIcon>
      <div className="w-0.5 h-[60px] mx-1.5 bg-[#33303c]" />
      <DockIcon label="Folder">
        <path d="M-1 9q0-3 3-3h12l4 4h30q3 0 3 3v8H-1z" fill="#4a9fd0" /><path d="M19 7h29v5H19z" fill="#f5f5f5" /><rect x="-1" y="13" width="52" height="37" rx="3" fill="#7ec4f2" />
      </DockIcon>
      <DockIcon label="Documents">
        <path d="M2-1h46v46H2z" fill="#f2f2f2" /><path d="M7 2h36v51H7z" fill="#fff" stroke="#ccc" /><path d="M7 2h3v51H7z" fill="#222" /><path d="M29 2h14v13H29z" fill="#eee" stroke="#ccc" /><path d="M33 4h8v8z" fill="#6fa08d" /><path d="M14 15h16M20 18h8M21 23h6" stroke="#888" />
      </DockIcon>
      <DockIcon label="Trash">
        <path d="M3 3l6 45q1 5 16 5t16-5l6-45z" fill="#e6e7ea" /><ellipse cx="25" cy="3" rx="22" ry="5" fill="#b9b9bf" stroke="#f1f1f3" strokeWidth="1.500" />
      </DockIcon>
    </div>
  );
}

function Wallpaper() {
  return (
    <svg viewBox="0 0 2880 96" preserveAspectRatio="none" className="absolute inset-0 w-full h-full">
      <defs>
        <linearGradient id="night"><stop offset="0" stopColor="#070a1a" /><stop offset=".2" stopColor="#120a12" /><stop offset=".5" stopColor="#0c0a16" /><stop offset="1" stopColor="#04050f" /></linearGradient>
        <linearGradient id="shade" x2="0" y2="1"><stop stopColor="#050509" stopOpacity=".85" /><stop offset="1" stopColor="#050509" stopOpacity="0" /></linearGradient>
      </defs>
      <path d="M0 0h2880v96H0z" fill="url(#night)" />
      <path d="M280 96l60-34 100-18 120-20 200-24 90 6v90z" fill="#2c0f18" />
      <path d="M330 84l60-30 80-12 20 8-50 30-60 16h-90zM680 56l50-8 50 20v28l-60-12z" fill="#5a1e28" />
      <path d="M440 80L700 0M480 90L740 10M520 96L770 20M380 70L620 0M560 96l220-60M600 96l180-44" stroke="#08060c" strokeWidth="4" />
      <path d="M0 90L420 6M200 96L520 10" stroke="#12172b" strokeWidth="8" opacity=".6" />
      <path d="M180 96l60-24 50-2-20 26z" fill="#2a1a34" />
      <path d="M2110 60l230-50-40 20-180 40zM2170 60l200-18-120 30z" fill="#1c0f18" />
      <path d="M0 0h2880v96H0z" fill="url(#shade)" />
      <path d="M2270 88h160" stroke="#142a5a" strokeWidth="2" /><path d="M2806 56q0-34 6-50l60-4M2822 34V4" stroke="#6e2018" strokeWidth="3" fill="none" />
    </svg>
  );
}

export default function App() {
  return (
    <div className="h-screen flex flex-col overflow-hidden bg-[linear-gradient(#883f38_100px,#05060f_100px)] font-['Inter',sans-serif]">
      <MenuBar />
      <div className="flex-1 min-h-0 flex flex-col rounded-[20px] overflow-hidden border-t-2 border-black bg-[#f5f5f5]">
        <TitleBar />
        <TabRow />
        <Ribbon />
        <Page />
        <StatusBar />
      </div>
      <div className="relative h-24 shrink-0 flex justify-center items-start pt-0.5">
        <Wallpaper />
        <Dock />
      </div>
    </div>
  );
}
